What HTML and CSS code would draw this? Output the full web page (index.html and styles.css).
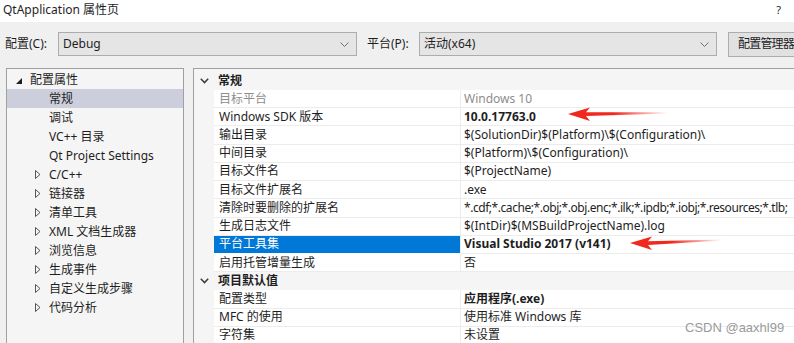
FILE: index.html
```html
<!DOCTYPE html>
<html lang="zh">
<head>
<meta charset="utf-8">
<title>QtApplication 属性页</title>
<link rel="stylesheet" href="styles.css">
</head>
<body>
<div class="titlebar">
  <span class="title">QtApplication 属性页</span>
  <span class="help">?</span>
</div>
<div class="toolbar">
  <span class="lbl lbl-config">配置(C):</span>
  <div class="combo combo-config"><span>Debug</span>
    <svg class="drop" width="9" height="5" viewBox="0 0 9 5"><polyline points="0.5,0.5 4.5,4.5 8.5,0.5" fill="none" stroke="#707070" stroke-width="1"/></svg>
  </div>
  <span class="lbl lbl-platform">平台(P):</span>
  <div class="combo combo-platform"><span>活动(x64)</span>
    <svg class="drop" width="9" height="5" viewBox="0 0 9 5"><polyline points="0.5,0.5 4.5,4.5 8.5,0.5" fill="none" stroke="#707070" stroke-width="1"/></svg>
  </div>
  <div class="button"><span>配置管理器</span></div>
</div>
<div class="panels">
  <div class="tree">
    <div class="node l0"><svg class="tw-open" width="6" height="6" viewBox="0 0 6 6"><polygon points="6,0 6,6 0,6" fill="#1e1e1e"/></svg><span>配置属性</span></div>
    <div class="node leaf selected"><span>常规</span></div>
    <div class="node leaf"><span>调试</span></div>
    <div class="node leaf"><span>VC++ 目录</span></div>
    <div class="node leaf"><span>Qt Project Settings</span></div>
    <div class="node l1"><svg class="tw-closed" width="6" height="9" viewBox="0 0 6 9"><polygon points="0.5,0.5 5,4.5 0.5,8.5" fill="none" stroke="#555" stroke-width="1"/></svg><span>C/C++</span></div>
    <div class="node l1"><svg class="tw-closed" width="6" height="9" viewBox="0 0 6 9"><polygon points="0.5,0.5 5,4.5 0.5,8.5" fill="none" stroke="#555" stroke-width="1"/></svg><span>链接器</span></div>
    <div class="node l1"><svg class="tw-closed" width="6" height="9" viewBox="0 0 6 9"><polygon points="0.5,0.5 5,4.5 0.5,8.5" fill="none" stroke="#555" stroke-width="1"/></svg><span>清单工具</span></div>
    <div class="node l1"><svg class="tw-closed" width="6" height="9" viewBox="0 0 6 9"><polygon points="0.5,0.5 5,4.5 0.5,8.5" fill="none" stroke="#555" stroke-width="1"/></svg><span>XML 文档生成器</span></div>
    <div class="node l1"><svg class="tw-closed" width="6" height="9" viewBox="0 0 6 9"><polygon points="0.5,0.5 5,4.5 0.5,8.5" fill="none" stroke="#555" stroke-width="1"/></svg><span>浏览信息</span></div>
    <div class="node l1"><svg class="tw-closed" width="6" height="9" viewBox="0 0 6 9"><polygon points="0.5,0.5 5,4.5 0.5,8.5" fill="none" stroke="#555" stroke-width="1"/></svg><span>生成事件</span></div>
    <div class="node l1"><svg class="tw-closed" width="6" height="9" viewBox="0 0 6 9"><polygon points="0.5,0.5 5,4.5 0.5,8.5" fill="none" stroke="#555" stroke-width="1"/></svg><span>自定义生成步骤</span></div>
    <div class="node l1"><svg class="tw-closed" width="6" height="9" viewBox="0 0 6 9"><polygon points="0.5,0.5 5,4.5 0.5,8.5" fill="none" stroke="#555" stroke-width="1"/></svg><span>代码分析</span></div>
  </div>
  <div class="grid">
    <div class="section first">
      <div class="gut"><svg width="9" height="6" viewBox="0 0 9 6"><polyline points="0.8,0.8 4.5,4.6 8.2,0.8" fill="none" stroke="#3c3c3c" stroke-width="1.5"/></svg></div>
      <div class="sec-title">常规</div>
    </div>
    <div class="row"><div class="gut"></div><div class="name dim">目标平台</div><div class="val dim">Windows 10</div></div>
    <div class="row"><div class="gut"></div><div class="name">Windows SDK 版本</div><div class="val bold">10.0.17763.0</div></div>
    <div class="row"><div class="gut"></div><div class="name">输出目录</div><div class="val">$(SolutionDir)$(Platform)\$(Configuration)\</div></div>
    <div class="row"><div class="gut"></div><div class="name">中间目录</div><div class="val">$(Platform)\$(Configuration)\</div></div>
    <div class="row"><div class="gut"></div><div class="name">目标文件名</div><div class="val">$(ProjectName)</div></div>
    <div class="row"><div class="gut"></div><div class="name">目标文件扩展名</div><div class="val">.exe</div></div>
    <div class="row"><div class="gut"></div><div class="name">清除时要删除的扩展名</div><div class="val tight">*.cdf;*.cache;*.obj;*.obj.enc;*.ilk;*.ipdb;*.iobj;*.resources;*.tlb;</div></div>
    <div class="row"><div class="gut"></div><div class="name">生成日志文件</div><div class="val">$(IntDir)$(MSBuildProjectName).log</div></div>
    <div class="row"><div class="gut"></div><div class="name selected">平台工具集</div><div class="val bold">Visual Studio 2017 (v141)</div></div>
    <div class="row"><div class="gut"></div><div class="name">启用托管增量生成</div><div class="val">否</div></div>
    <div class="section">
      <div class="gut"><svg width="9" height="6" viewBox="0 0 9 6"><polyline points="0.8,0.8 4.5,4.6 8.2,0.8" fill="none" stroke="#3c3c3c" stroke-width="1.5"/></svg></div>
      <div class="sec-title">项目默认值</div>
    </div>
    <div class="row"><div class="gut"></div><div class="name">配置类型</div><div class="val bold">应用程序(.exe)</div></div>
    <div class="row"><div class="gut"></div><div class="name">MFC 的使用</div><div class="val">使用标准 Windows 库</div></div>
    <div class="row"><div class="gut"></div><div class="name">字符集</div><div class="val">未设置</div></div>
  </div>
</div>

<svg class="annot" width="794" height="343" viewBox="0 0 794 343">
  <defs>
    <linearGradient id="fade1" x1="568" y1="0" x2="668" y2="0" gradientUnits="userSpaceOnUse">
      <stop offset="0" stop-color="#f0281e"/>
      <stop offset="0.45" stop-color="#f0281e"/>
      <stop offset="1" stop-color="#f0281e" stop-opacity="0"/>
    </linearGradient>
    <linearGradient id="fade2" x1="630" y1="0" x2="722" y2="0" gradientUnits="userSpaceOnUse">
      <stop offset="0" stop-color="#f0281e"/>
      <stop offset="0.45" stop-color="#f0281e"/>
      <stop offset="1" stop-color="#f0281e" stop-opacity="0"/>
    </linearGradient>
  </defs>
  <path d="M568,114 L590,107.5 L586,112.3 L668,112.2 L668,113.4 L586,116 L590,121 Z" fill="url(#fade1)"/>
  <path d="M630,243 L652,236.5 L648,241.2 L722,239.4 L722,240.6 L648,245 L652,250 Z" fill="url(#fade2)"/>
</svg>
<div class="watermark">CSDN @aaxhl99</div>
</body>
</html>
```
FILE: styles.css
```css
* { box-sizing: border-box; }
html, body { margin: 0; padding: 0; }
body {
  width: 794px;
  height: 343px;
  overflow: hidden;
  position: relative;
  background: #f0f0f0;
  font-family: "Noto Sans", "Noto Sans CJK SC", sans-serif;
  font-size: 12px;
  color: #1e1e1e;
}
.titlebar {
  height: 22px;
  background: #ffffff;
  display: flex;
  align-items: center;
  justify-content: space-between;
  padding: 0 13px 3px 3px;
  line-height: 16px;
}
.help { font-size: 11px; }
.toolbar {
  display: flex;
  align-items: center;
  height: 24px;
  margin: 10px 0 12px 0;
  padding-left: 5px;
  white-space: nowrap;
}
.toolbar > * { flex: none; }
.lbl { display: block; line-height: 16px; }
.lbl-config { width: 53px; }
.lbl-platform { width: 52px; margin-left: 10px; }
.combo {
  height: 24px;
  background: #e5e5e5;
  border: 1px solid #acacac;
  display: flex;
  align-items: center;
  justify-content: space-between;
  padding: 0 7px 0 4px;
  line-height: 16px;
}
.combo-config { width: 299px; }
.combo-platform { width: 298px; }
.button {
  width: 66px;
  height: 25px;
  margin-left: 11px;
  background: #e1e1e1;
  border: 1px solid #adadad;
  border-right: none;
  padding: 0 0 0 9px;
  display: flex;
  align-items: center;
  line-height: 16px;
  letter-spacing: -0.8px;
}
.panels {
  display: flex;
  gap: 9px;
  padding-left: 6px;
  height: 275px;
  align-items: stretch;
}
.tree {
  flex: none;
  width: 178px;
  height: 280px;
  background: #f5f5f5;
  border: 1px solid #a0a0a0;
  padding-top: 1px;
}
.node {
  height: 19px;
  display: flex;
  align-items: center;
  white-space: nowrap;
  line-height: 16px;
}
.node.l0 { padding-left: 9px; }
.node.l0 svg { margin-right: 8px; margin-top: 2px; }
.node.l1 { padding-left: 28px; }
.node.l1 svg { margin-right: 8px; }
.node.leaf { padding-left: 42px; }
.node.selected { background: #cccedb; }
.grid {
  flex: none;
  width: 601px;
  height: 280px;
  background: #ffffff;
  border: 1px solid #a0a0a0;
  border-right: none;
}
.gut {
  width: 20px;
  flex: none;
  background: #f5f5f5;
  display: flex;
  align-items: center;
  justify-content: center;
  padding-left: 1px;
}
.section {
  display: flex;
  height: 18.23px;
  background: #f5f5f5;
  align-items: stretch;
}
.section.first { height: 21px; padding-top: 2px; }
.sec-title {
  font-weight: bold;
  padding-left: 4px;
  display: flex;
  align-items: center;
  line-height: 16px;
}
.row {
  display: flex;
  height: 18.23px;
  align-items: stretch;
  white-space: nowrap;
}
.name {
  width: 246px;
  flex: none;
  border-bottom: 1px solid #ececec;
  padding-left: 5px;
  display: flex;
  align-items: center;
  line-height: 16px;
}
.name.selected {
  background: #0078d7;
  color: #ffffff;
  border-bottom-color: #ffffff;
}
.val {
  flex: 1;
  min-width: 0;
  border-left: 1px solid #ececec;
  border-bottom: 1px solid #ececec;
  padding-left: 3px;
  display: flex;
  align-items: center;
  line-height: 16px;
  overflow: hidden;
}
.val.tight { letter-spacing: -0.45px; }
.dim { color: #8d8d8d; }
.bold { font-weight: bold; }
.annot {
  position: absolute;
  left: 0;
  top: 0;
  pointer-events: none;
}
.watermark {
  position: absolute;
  left: 685px;
  top: 320px;
  font-size: 13px;
  line-height: 16px;
  color: #9a9a9a;
  text-shadow: 0 0 1px #ffffff;
  font-family: "Liberation Sans", sans-serif;
}
```
